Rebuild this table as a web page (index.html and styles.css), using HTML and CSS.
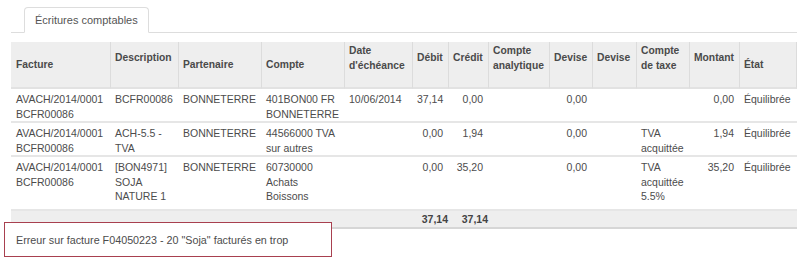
FILE: index.html
```html
<!DOCTYPE html>
<html lang="fr">
<head>
<meta charset="utf-8">
<title>Écritures comptables</title>
<link rel="stylesheet" href="styles.css">
</head>
<body>
<div class="page">
  <div class="tabs">
    <div class="tab">Écritures comptables</div>
  </div>
  <table class="grid">
    <colgroup>
      <col style="width:99px"><col style="width:68px"><col style="width:83px"><col style="width:83px">
      <col style="width:68px"><col style="width:36px"><col style="width:40px"><col style="width:61px">
      <col style="width:43px"><col style="width:44px"><col style="width:53px"><col style="width:50px">
      <col style="width:58px">
    </colgroup>
    <thead>
      <tr>
        <th>Facture</th>
        <th class="up">Description</th>
        <th>Partenaire</th>
        <th>Compte</th>
        <th class="up">Date d'échéance</th>
        <th class="up">Débit</th>
        <th class="up">Crédit</th>
        <th class="up">Compte analytique</th>
        <th class="up">Devise</th>
        <th class="up">Devise</th>
        <th class="up">Compte de taxe</th>
        <th class="up">Montant</th>
        <th class="last">État</th>
      </tr>
    </thead>
    <tbody>
      <tr>
        <td>AVACH/2014/0001 BCFR00086</td>
        <td>BCFR00086</td>
        <td>BONNETERRE</td>
        <td>401BON00 FR BONNETERRE</td>
        <td>10/06/2014</td>
        <td class="num">37,14</td>
        <td class="num">0,00</td>
        <td></td>
        <td class="num">0,00</td>
        <td></td>
        <td></td>
        <td class="num">0,00</td>
        <td>Équilibrée</td>
      </tr>
      <tr>
        <td>AVACH/2014/0001 BCFR00086</td>
        <td>ACH-5.5 - TVA</td>
        <td>BONNETERRE</td>
        <td>44566000 TVA sur autres</td>
        <td></td>
        <td class="num">0,00</td>
        <td class="num">1,94</td>
        <td></td>
        <td class="num">0,00</td>
        <td></td>
        <td>TVA acquittée</td>
        <td class="num">1,94</td>
        <td>Équilibrée</td>
      </tr>
      <tr class="tall">
        <td>AVACH/2014/0001 BCFR00086</td>
        <td>[BON4971] SOJA NATURE 1</td>
        <td>BONNETERRE</td>
        <td>60730000 Achats Boissons</td>
        <td></td>
        <td class="num">0,00</td>
        <td class="num">35,20</td>
        <td></td>
        <td class="num">0,00</td>
        <td></td>
        <td>TVA acquittée 5.5%</td>
        <td class="num">35,20</td>
        <td>Équilibrée</td>
      </tr>
    </tbody>
    <tfoot>
      <tr>
        <td></td><td></td><td></td><td></td><td></td>
        <td class="num">37,14</td>
        <td class="num">37,14</td>
        <td></td><td></td><td></td><td></td><td></td><td></td>
      </tr>
    </tfoot>
  </table>
  <div class="note"><span class="note-text">Erreur sur facture F04050223 - 20 "Soja" facturés en trop</span></div>
</div>
</body>
</html>
```

FILE: styles.css
```css
html, body {
  margin: 0;
  padding: 0;
  background: #ffffff;
}

body {
  font-family: "Liberation Sans", Arial, sans-serif;
  color: #4c4c4c;
  min-height: 267px;
}

.page {
  position: relative;
  padding: 7px 3px 0 11px;
}

.tabs {
  display: flex;
  border-bottom: 1px solid #dddddd;
  padding-left: 13px;
}

.tab {
  font-size: 11px;
  line-height: 24px;
  padding: 0 10px;
  border: 1px solid #dddddd;
  border-bottom-color: #ffffff;
  border-radius: 4px 4px 0 0;
  background: #ffffff;
  margin-bottom: -1px;
  color: #555555;
}

.grid {
  margin-top: 9px;
  width: 786px;
  table-layout: fixed;
  border-collapse: separate;
  border-spacing: 0;
  font-size: 10.5px;
  line-height: 14.5px;
}

.grid th {
  box-sizing: border-box;
  height: 46px;
  background: #eeeeee;
  font-weight: bold;
  font-size: 10.3px;
  text-align: left;
  vertical-align: middle;
  padding: 2px 5px 0 5px;
  border-bottom: 2px solid #e2e2e2;
  color: #4a4a4a;
}

.grid th + th {
  border-left: 1px solid #dcdcdc;
  padding-left: 4px;
}

.grid th.up {
  padding-bottom: 14px;
}

.grid th.last {
  border-right: 1px solid #dcdcdc;
}

.grid td {
  vertical-align: top;
  padding: 3px 5px 0 5px;
  border-bottom: 2px solid #e6e6e6;
}

.grid tr.tall td {
  padding-bottom: 5.5px;
}

.grid td.num {
  text-align: right;
}

.grid tfoot td {
  background: #eeeeee;
  border-bottom: 2px solid #d6d6d6;
  font-weight: bold;
  padding: 1px 5px 0 5px;
  height: 15px;
  line-height: 15px;
  color: #444444;
}

.grid tfoot td.num {
  padding-right: 0;
}

.note {
  position: absolute;
  z-index: 2;
  left: 4px;
  top: 222px;
  width: 328px;
  height: 35px;
  box-sizing: border-box;
  border: 1.5px solid #a8404f;
  background: #ffffff;
  display: flex;
  align-items: center;
  padding: 1px 0 0 11px;
}

.note-text {
  font-size: 10.75px;
  line-height: 14px;
  color: #4c4c4c;
  white-space: nowrap;
}
```
